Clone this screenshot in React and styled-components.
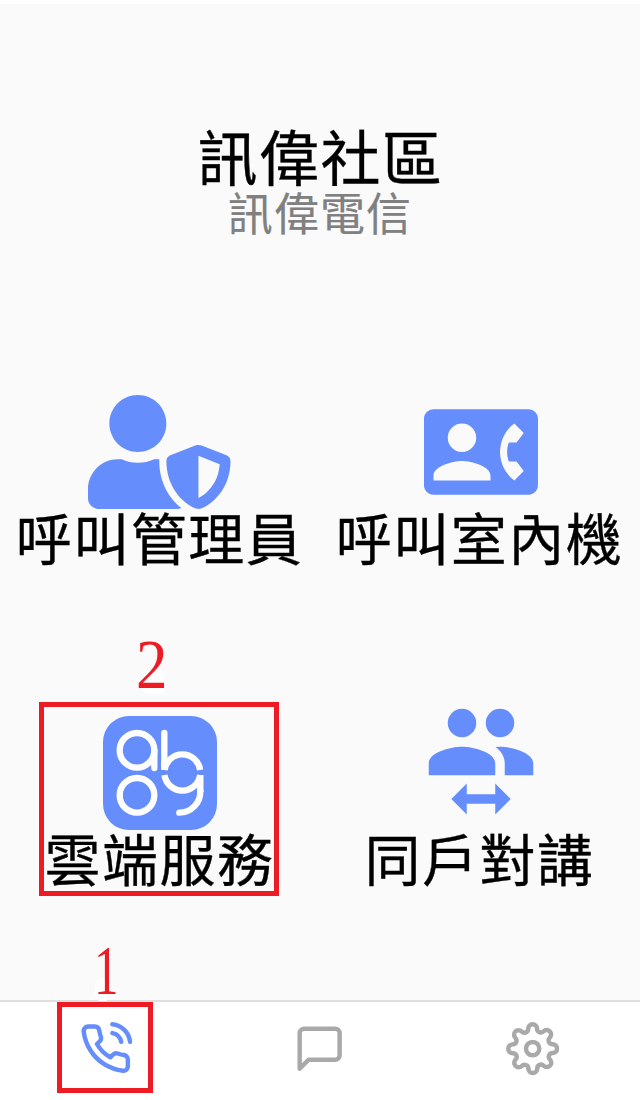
import React from "react";
import styled, { createGlobalStyle } from "styled-components";
import { FaUserShield } from "react-icons/fa";
import { FiPhoneCall, FiMessageSquare, FiSettings } from "react-icons/fi";

const BLUE = "#658dfb";
const RED = "#ed1c24";

const GlobalStyle = createGlobalStyle`
  * { box-sizing: border-box; }
  body {
    margin: 0;
    background: #fff;
    font-family: "Noto Sans CJK TC", "Noto Sans", sans-serif;
  }
`;

const Screen = styled.div`
  display: flex;
  flex-direction: column;
  width: 640px;
  height: 1100px;
  padding-top: 4px;
  overflow: hidden;
`;

const Content = styled.main`
  flex: 1;
  min-height: 0;
  background: #fafafa;
`;

const Header = styled.header`
  display: flex;
  flex-direction: column;
  align-items: center;
  height: 391px;
  padding-top: 120px;
`;

const Title = styled.h1`
  margin: 0;
  font-size: 60px;
  font-weight: 400;
  line-height: 62px;
  letter-spacing: 1.5px;
  padding-left: 1px;
  color: #000;
  -webkit-text-stroke: 0.35px currentColor;
`;

const Subtitle = styled.p`
  margin: 2px 0 0;
  font-size: 45px;
  line-height: 48px;
  letter-spacing: 1.1px;
  color: #808080;
  -webkit-text-stroke: 0.2px currentColor;
`;

const Services = styled.section`
  display: grid;
  grid-template-columns: 1fr 1fr;
  grid-template-rows: 320.5px auto;
`;

const Service = styled.div`
  position: relative;
  display: flex;
  flex-direction: column;
  align-items: center;
  color: ${BLUE};
`;

const IconSlot = styled.div`
  display: flex;
  justify-content: center;
  height: 114px;
  margin-top: ${(p) => -(p.$raise || 0)}px;
  margin-bottom: ${(p) => p.$raise || 0}px;
  padding-left: ${(p) => p.$indent || 0}px;
  padding-right: ${(p) => p.$outdent || 0}px;

  svg {
    display: block;
    height: 114px;
    width: ${(p) => p.$width || 114}px;
  }
`;

const Label = styled.span`
  margin-top: -3px;
  padding-right: 1px;
  font-size: 56px;
  line-height: 60px;
  letter-spacing: 1.5px;
  white-space: nowrap;
  color: #000;
  -webkit-text-stroke: 0.35px currentColor;
`;

const TabBar = styled.nav`
  display: grid;
  grid-template-columns: repeat(3, 1fr);
  flex-shrink: 0;
  height: 100px;
  border-top: 2px solid #dfdfdf;
  background: #fff;
`;

const Tab = styled.div`
  position: relative;
  display: flex;
  justify-content: center;
  padding-top: 20.3px;
  padding-right: ${(p) => p.$outdent || 0}px;
  color: ${(p) => (p.$active ? BLUE : "#a9a9a9")};

  svg {
    flex-shrink: 0;
    width: 53.3px;
    height: 53.3px;
  }
`;

const Frame = styled.div`
  position: absolute;
  left: ${(p) => p.$left}px;
  top: ${(p) => p.$top}px;
  width: ${(p) => p.$width}px;
  height: ${(p) => p.$height}px;
  border: 5px solid ${RED};
`;

const Step = styled.span`
  position: absolute;
  left: ${(p) => p.$left}px;
  top: ${(p) => p.$top}px;
  z-index: 1;
  font-family: "Liberation Serif", serif;
  font-size: 70px;
  line-height: 70px;
  color: ${RED};
  transform: scaleX(${(p) => p.$stretch});
  transform-origin: left;

  &::before {
    content: "";
    position: absolute;
    z-index: -1;
    left: ${(p) => p.$patchLeft}px;
    bottom: ${(p) => p.$patchBottom}px;
    width: ${(p) => p.$patchWidth}px;
    height: 23px;
    border-radius: 10px 4px 2px 8px;
    background: #fff;
  }
`;

const ContactPhoneIcon = () => (
  <svg viewBox="0 0 24 24" fill="currentColor">
    <path d="M22 3H2C.9 3 0 3.9 0 5v14c0 1.1.9 2 2 2h20c1.1 0 1.99-.9 1.99-2L24 5c0-1.1-.9-2-2-2zM8 6c1.66 0 3 1.34 3 3s-1.34 3-3 3-3-1.34-3-3 1.34-3 3-3zm6 12H2v-1c0-2 4-3.1 6-3.1s6 1.1 6 3.1v1zm3.85-4h1.64L21 16l-1.99 1.99c-1.31-.98-2.28-2.38-2.73-3.99-.18-.64-.28-1.31-.28-2s.1-1.36.28-2c.45-1.62 1.42-3.01 2.73-3.99L21 8l-1.51 2h-1.64c-.22.63-.35 1.3-.35 2s.13 1.37.35 2z" />
  </svg>
);

const AccountSwitchIcon = () => (
  <svg viewBox="0 0 24 24" fill="currentColor">
    <path d="M16,9C18.33,9 23,10.17 23,12.5V15H17V12.5C17,11 16.19,9.89 15.04,9.05L16,9M8,9C10.33,9 15,10.17 15,12.5V15H1V12.5C1,10.17 5.67,9 8,9M8,7A3,3 0 0,1 5,4A3,3 0 0,1 8,1A3,3 0 0,1 11,4A3,3 0 0,1 8,7M16,7A3,3 0 0,1 13,4A3,3 0 0,1 16,1A3,3 0 0,1 19,4A3,3 0 0,1 16,7M9,16.75V19H15V16.75L18.25,20L15,23.25V21H9V23.25L5.75,20L9,16.75Z" />
  </svg>
);

const CloudLogo = () => (
  <svg viewBox="0 0 342 342" fill="none" stroke="#fff" strokeWidth="19">
    <rect width="342" height="342" rx="78" fill="currentColor" stroke="none" />
    <circle cx="102" cy="103" r="52" />
    <path d="M154 103V156" strokeLinecap="round" />
    <circle cx="102" cy="238" r="52" />
    <path d="M184 51V150" strokeLinecap="round" />
    <path d="M184 140V162M184.500 162A54 54 0 0 1 291.500 162" />
    <path d="M184.500 177A54 54 0 0 0 291.500 177M292 177V228" />
    <path d="M292 226A63 63 0 0 1 229 290" strokeLinecap="round" />
  </svg>
);

export default function App() {
  return (
    <Screen>
      <GlobalStyle />
      <Content>
        <Header>
          <Title>訊偉社區</Title>
          <Subtitle>訊偉電信</Subtitle>
        </Header>
        <Services>
          <Service>
            <IconSlot $width={142.5} $outdent={1.5}>
              <FaUserShield />
            </IconSlot>
            <Label>呼叫管理員</Label>
          </Service>
          <Service>
            <IconSlot $indent={2}>
              <ContactPhoneIcon />
            </IconSlot>
            <Label>呼叫室內機</Label>
          </Service>
          <Service>
            <Step $left={136} $top={-86} $stretch={0.9} $patchLeft={7} $patchBottom={6} $patchWidth={24}>
              2
            </Step>
            <Frame $left={39} $top={-13.5} $width={240} $height={194} />
            <IconSlot>
              <CloudLogo />
            </IconSlot>
            <Label>雲端服務</Label>
          </Service>
          <Service>
            <IconSlot $indent={2} $raise={11.5}>
              <AccountSwitchIcon />
            </IconSlot>
            <Label>同戶對講</Label>
          </Service>
        </Services>
      </Content>
      <TabBar>
        <Tab $active $outdent={3}>
          <Step $left={94} $top={-66} $stretch={0.7} $patchLeft={1} $patchBottom={5} $patchWidth={18}>
            1
          </Step>
          <Frame $left={57} $top={0} $width={96} $height={91} />
          <FiPhoneCall />
        </Tab>
        <Tab>
          <FiMessageSquare />
        </Tab>
        <Tab $outdent={1}>
          <FiSettings />
        </Tab>
      </TabBar>
    </Screen>
  );
}
